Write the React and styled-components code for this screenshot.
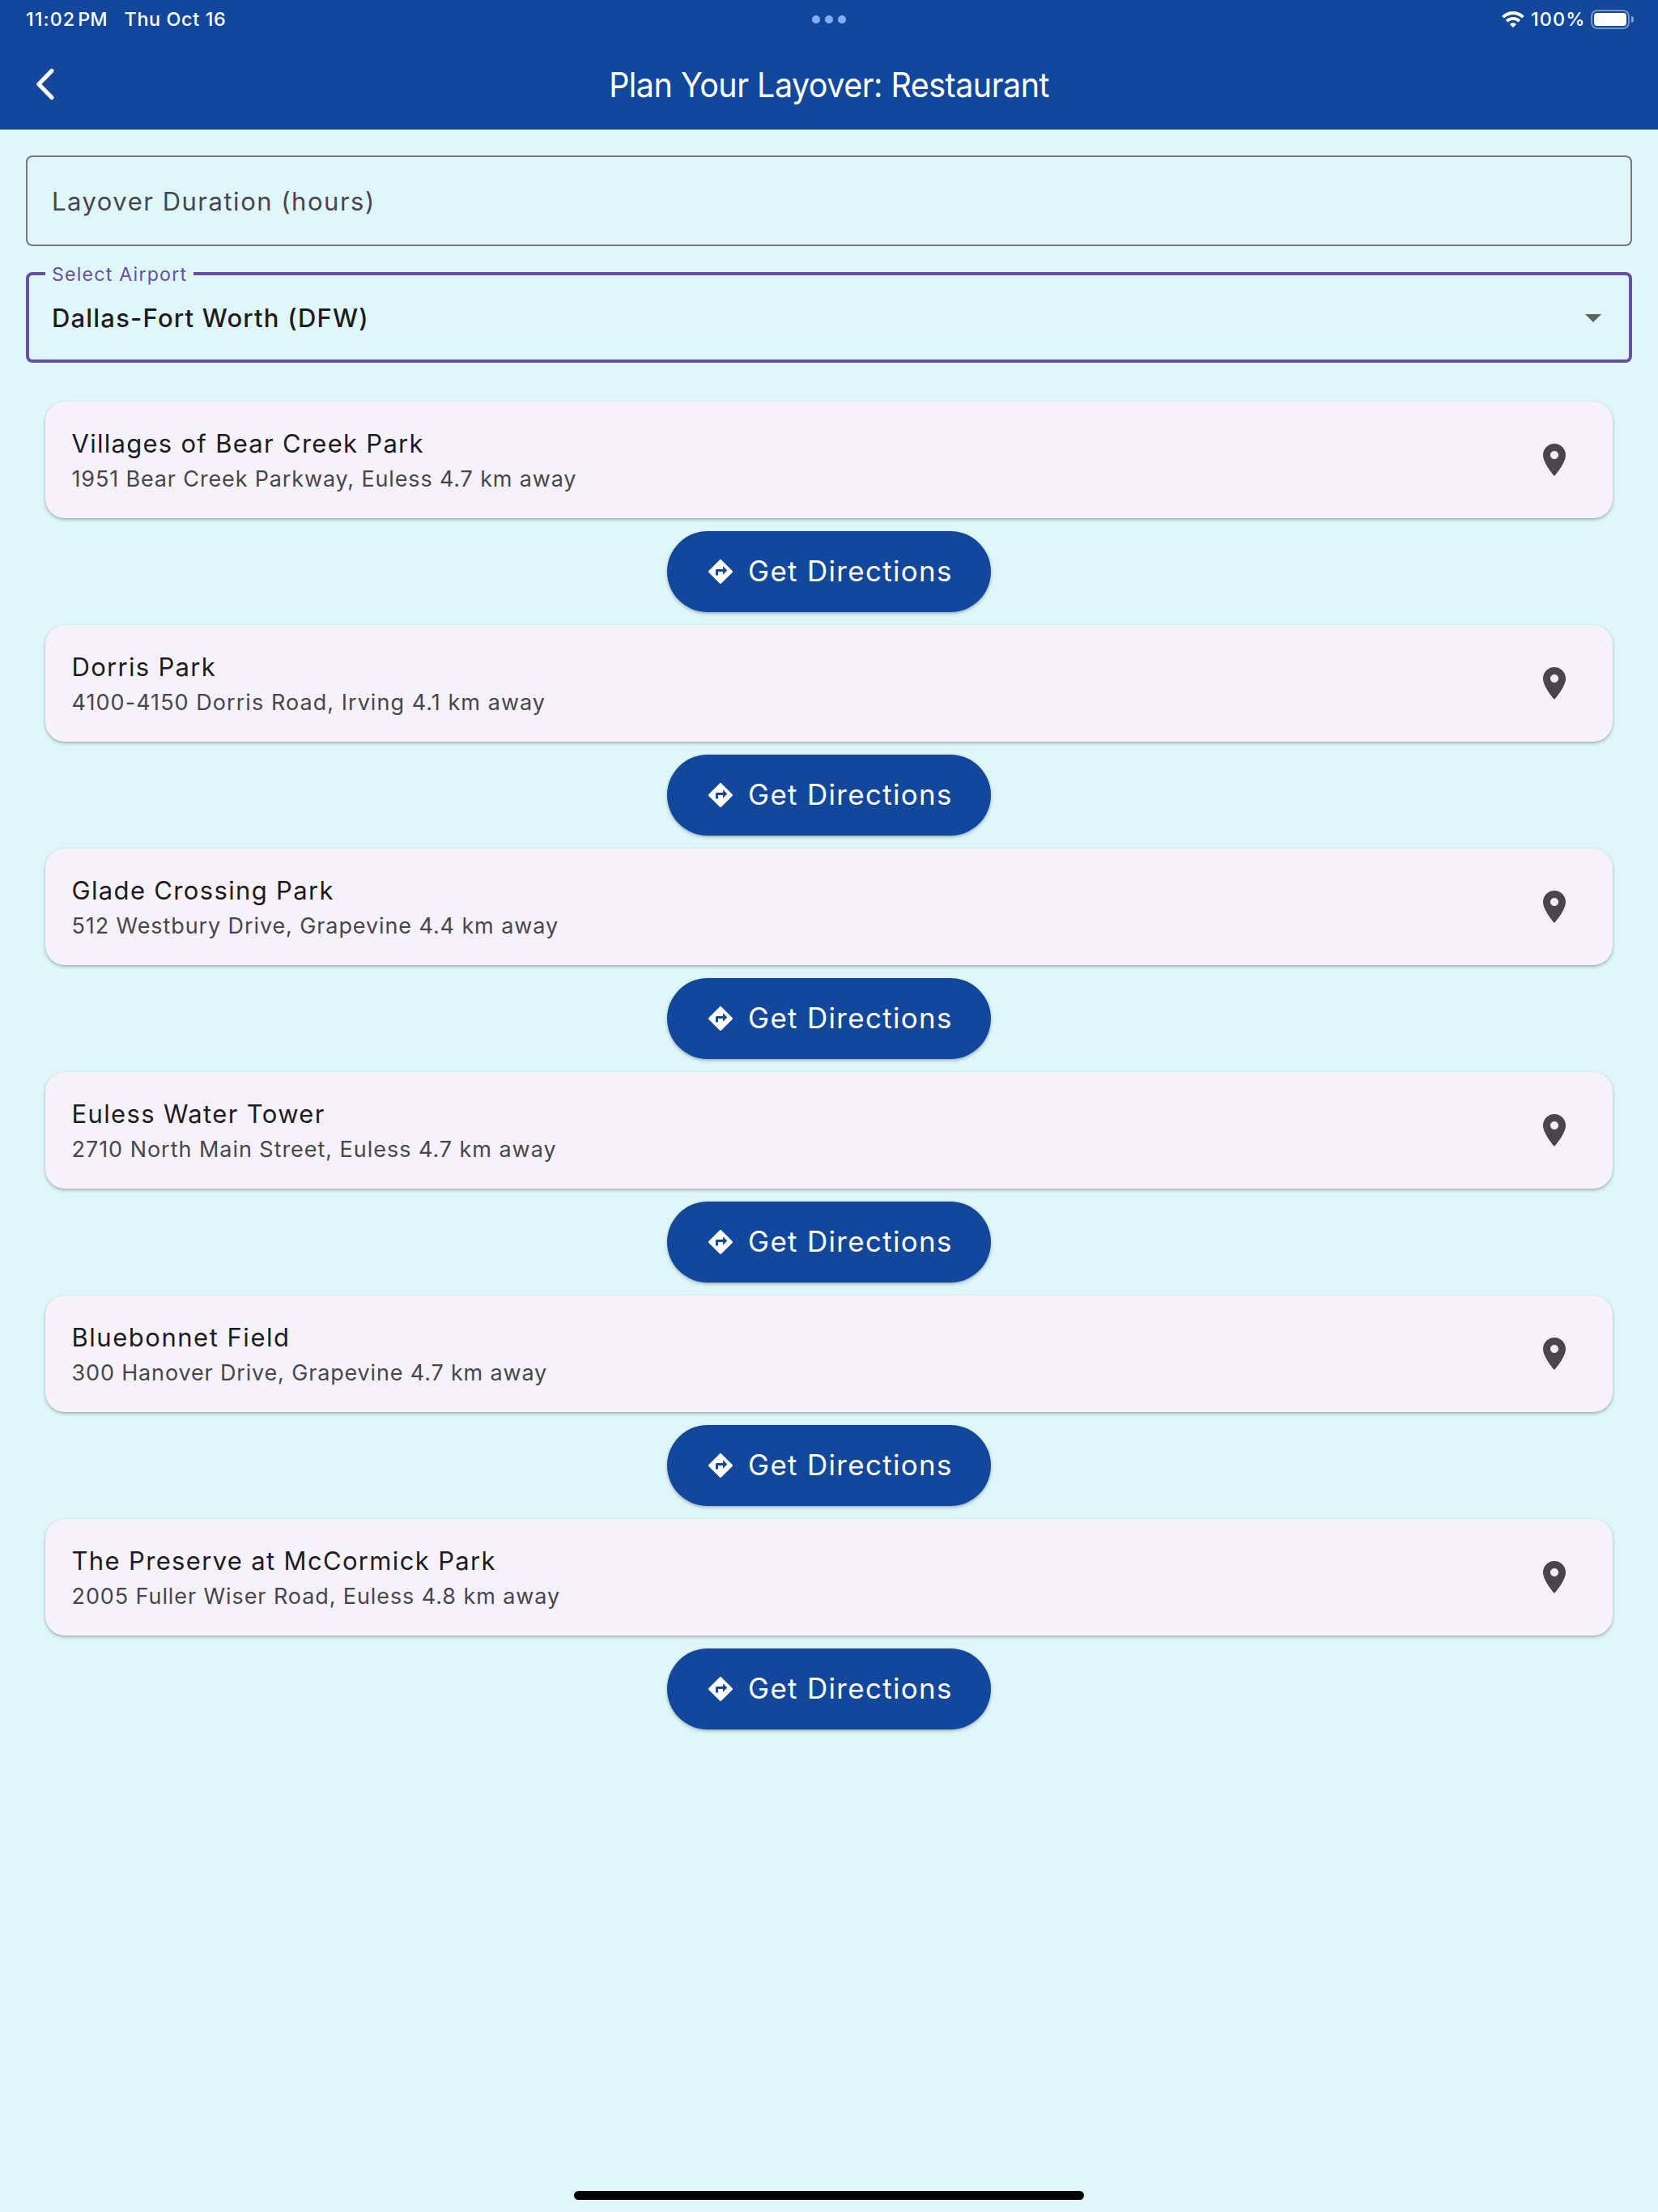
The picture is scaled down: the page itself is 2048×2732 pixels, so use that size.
import React from "react";
import styled, { createGlobalStyle } from "styled-components";

const color = {
  bar: "#13479b",
  page: "#dff7f9",
  card: "#f6f2f9",
  ink: "#1d1b20",
  muted: "#49454e",
  outline: "#7a757e",
  focus: "#6750a4",
};

const GlobalStyle = createGlobalStyle`
  * { box-sizing: border-box; }
  body {
    margin: 0;
    background: ${color.page};
    font-family: Inter, "Liberation Sans", sans-serif;
    font-weight: 370;
    -webkit-font-smoothing: antialiased;
  }
`;

const Screen = styled.div`
  width: 2048px;
  height: 2732px;
  display: flex;
  flex-direction: column;
  overflow: hidden;
  background: ${color.page};
`;

const Header = styled.header`
  height: 160px;
  flex: none;
  background: ${color.bar};
  color: #fff;
`;

const StatusBar = styled.div`
  height: 48px;
  padding: 0 30px 0 32px;
  display: grid;
  grid-template-columns: 1fr auto 1fr;
  align-items: center;
  font-size: 23.3px;
  font-weight: 480;
  line-height: 46px;
`;

const Clock = styled.div`
  display: flex;
  white-space: nowrap;
`;

const Time = styled.span`
  letter-spacing: 1.1px;
  margin-right: 3px;
`;

const Meridiem = styled.span`
  margin-right: 21px;
`;

const DateText = styled.span`
  letter-spacing: 0.66px;
`;

const Dots = styled.div`
  display: flex;
  gap: 6px;
  margin-left: -2px;
`;

const Dot = styled.i`
  width: 10px;
  height: 10px;
  border-radius: 50%;
  background: #7dafff;
`;

const Indicators = styled.div`
  display: flex;
  align-items: center;
  justify-content: flex-end;
`;

const Percent = styled.span`
  width: 73px;
  padding-left: 8px;
  letter-spacing: 1.2px;
`;

const Battery = styled.div`
  width: 48px;
  height: 24px;
  margin-left: 9px;
  padding: 2px;
  border: 2px solid rgba(255, 255, 255, 0.42);
  border-radius: 8px;
`;

const Charge = styled.div`
  height: 16px;
  border-radius: 4px;
  background: #fff;
`;

const BatteryCap = styled.div`
  width: 3px;
  height: 8px;
  margin-left: 2px;
  border-radius: 0 3px 3px 0;
  background: rgba(255, 255, 255, 0.5);
`;

const AppBar = styled.div`
  height: 112px;
  padding: 0 32px;
  display: grid;
  grid-template-columns: 48px 1fr 48px;
  align-items: center;
`;

const BackButton = styled.button`
  width: 48px;
  height: 48px;
  padding: 0;
  border: 0;
  background: none;
  color: inherit;
  display: flex;
`;

const Title = styled.h1`
  margin: 0;
  padding-top: 1px;
  text-align: center;
  font-size: 42.5px;
  font-weight: 380;
  line-height: 52px;
  letter-spacing: -0.58px;
  white-space: nowrap;
  transform: scaleX(0.93);
`;

const Content = styled.main`
  flex: 1;
  padding: 32px;
  display: flex;
  flex-direction: column;
`;

const Field = styled.div`
  position: relative;
  height: 112px;
  margin-bottom: 32px;
  padding: 0 ${(p) => (p.$focused ? 20 : 30)}px 0 ${(p) => (p.$focused ? 28 : 30)}px;
  display: flex;
  align-items: center;
  justify-content: space-between;
  border: ${(p) => (p.$focused ? `4px solid ${color.focus}` : `2px solid ${color.outline}`)};
  border-radius: 8px;
`;

const Placeholder = styled.span`
  padding-top: 2px;
  font-size: 31px;
  line-height: 48px;
  letter-spacing: 1.51px;
  color: ${color.muted};
`;

const FloatingLabel = styled.span`
  position: absolute;
  left: 20px;
  top: -17px;
  width: 183px;
  padding-left: 8px;
  background: ${color.page};
  color: ${color.focus};
  font-size: 23.2px;
  line-height: 32px;
  letter-spacing: 1.2px;
  white-space: nowrap;
`;

const FieldValue = styled.span`
  padding-top: 2px;
  font-size: 31px;
  font-weight: 480;
  line-height: 48px;
  letter-spacing: 1.19px;
  color: ${color.ink};
`;

const PlaceList = styled.ul`
  margin: 16px 24px 0;
  padding: 0;
  display: flex;
  flex-direction: column;
  gap: 16px;
  list-style: none;
`;

const Place = styled.li`
  display: flex;
  flex-direction: column;
  align-items: center;
  gap: 16px;
`;

const Card = styled.article`
  width: 100%;
  height: 144px;
  padding: 0 48px 0 32.5px;
  display: flex;
  align-items: center;
  justify-content: space-between;
  border-radius: 24px;
  background: ${color.card};
  box-shadow: 0 2px 4px rgba(0, 0, 0, 0.25), 0 1px 2px rgba(0, 0, 0, 0.08);
`;

const PlaceText = styled.div`
  display: flex;
  flex-direction: column;
  white-space: nowrap;
`;

const PlaceName = styled.span`
  font-size: 31px;
  line-height: 48px;
  letter-spacing: ${(p) => p.$tracking}px;
  color: ${color.ink};
`;

const PlaceAddress = styled.span`
  font-size: 27px;
  line-height: 40px;
  letter-spacing: ${(p) => p.$tracking}px;
  color: ${color.muted};
`;

const DirectionsButton = styled.button`
  width: 400px;
  height: 100px;
  padding: 0 0 0 48px;
  display: flex;
  align-items: center;
  gap: 16px;
  border: 0;
  border-radius: 50px;
  background: ${color.bar};
  color: #fff;
  font-family: inherit;
  font-size: 34.9px;
  font-weight: 400;
  white-space: nowrap;
  box-shadow: 0 2px 4px rgba(0, 0, 0, 0.25), 0 1px 2px rgba(0, 0, 0, 0.08);
`;

const ButtonLabel = styled.span`
  padding-bottom: 2px;
  line-height: 48px;
  letter-spacing: 1.35px;
`;

const HomeIndicator = styled.div`
  width: 630px;
  height: 11px;
  flex: none;
  margin: 0 auto 15px;
  border-radius: 6px;
  background: #000;
`;

const WifiIcon = () => (
  <svg width="28" height="20" viewBox="0 0 28 20" fill="none" stroke="#fff">
    <path d="M1.6 7.1C8.6.3 19.4.3 26.4 7.1" strokeWidth="4" />
    <path d="M6.2 12.1c4.4-4.3 11.2-4.3 15.6 0" strokeWidth="3.8" />
    <path d="M14 20l-4.1-4.1c2.3-2.2 5.9-2.2 8.2 0z" fill="#fff" stroke="none" />
  </svg>
);

const BackIcon = () => (
  <svg width="48" height="48" viewBox="0 0 48 48" fill="none">
    <path
      d="M32 7.4L15.8 24 32 40.5"
      stroke="#fff"
      strokeWidth="5.2"
      strokeLinecap="round"
      strokeLinejoin="round"
    />
  </svg>
);

const CaretIcon = () => (
  <svg width="48" height="48" viewBox="0 0 24 24" fill="#616161">
    <path d="M7 10l5 5 5-5z" />
  </svg>
);

const PinIcon = () => (
  <svg width="48" height="48" viewBox="0 0 24 24" fill={color.muted}>
    <path d="M12 2C8.13 2 5 5.13 5 9c0 5.25 7 13 7 13s7-7.75 7-13c0-3.87-3.13-7-7-7zm0 9.5c-1.38 0-2.5-1.12-2.5-2.5s1.12-2.5 2.5-2.5 2.5 1.12 2.5 2.5-1.12 2.5-2.5 2.5z" />
  </svg>
);

const DirectionsIcon = () => (
  <svg width="36" height="36" viewBox="0 0 24 24" fill="#fff">
    <path d="M21.71 11.29l-9-9c-.39-.39-1.02-.39-1.41 0l-9 9c-.39.39-.39 1.02 0 1.41l9 9c.39.39 1.02.39 1.41 0l9-9c.39-.38.39-1.01 0-1.41zM14 14.5V12h-4v3H8v-4c0-.55.45-1 1-1h5V7.5l3.5 3.5-3.5 3.5z" />
  </svg>
);

const places = [
  { name: "Villages of Bear Creek Park", nameTracking: 1.28, address: "1951 Bear Creek Parkway, Euless 4.7 km away", addressTracking: 0.85 },
  { name: "Dorris Park", nameTracking: 1.3, address: "4100-4150 Dorris Road, Irving 4.1 km away", addressTracking: 1.05 },
  { name: "Glade Crossing Park", nameTracking: 1.34, address: "512 Westbury Drive, Grapevine 4.4 km away", addressTracking: 0.9 },
  { name: "Euless Water Tower", nameTracking: 1.36, address: "2710 North Main Street, Euless 4.7 km away", addressTracking: 0.96 },
  { name: "Bluebonnet Field", nameTracking: 1.52, address: "300 Hanover Drive, Grapevine 4.7 km away", addressTracking: 0.84 },
  { name: "The Preserve at McCormick Park", nameTracking: 1.34, address: "2005 Fuller Wiser Road, Euless 4.8 km away", addressTracking: 0.91 },
];

export default function App() {
  return (
    <>
      <GlobalStyle />
      <Screen>
        <Header>
          <StatusBar>
            <Clock>
              <Time>11:02</Time>
              <Meridiem>PM</Meridiem>
              <DateText>Thu Oct 16</DateText>
            </Clock>
            <Dots>
              <Dot />
              <Dot />
              <Dot />
            </Dots>
            <Indicators>
              <WifiIcon />
              <Percent>100%</Percent>
              <Battery>
                <Charge />
              </Battery>
              <BatteryCap />
            </Indicators>
          </StatusBar>
          <AppBar>
            <BackButton aria-label="Back">
              <BackIcon />
            </BackButton>
            <Title>Plan Your Layover: Restaurant</Title>
          </AppBar>
        </Header>
        <Content>
          <Field>
            <Placeholder>Layover Duration (hours)</Placeholder>
          </Field>
          <Field $focused>
            <FloatingLabel>Select Airport</FloatingLabel>
            <FieldValue>Dallas-Fort Worth (DFW)</FieldValue>
            <CaretIcon />
          </Field>
          <PlaceList>
            {places.map((place) => (
              <Place key={place.name}>
                <Card>
                  <PlaceText>
                    <PlaceName $tracking={place.nameTracking}>{place.name}</PlaceName>
                    <PlaceAddress $tracking={place.addressTracking}>{place.address}</PlaceAddress>
                  </PlaceText>
                  <PinIcon />
                </Card>
                <DirectionsButton>
                  <DirectionsIcon />
                  <ButtonLabel>Get Directions</ButtonLabel>
                </DirectionsButton>
              </Place>
            ))}
          </PlaceList>
        </Content>
        <HomeIndicator />
      </Screen>
    </>
  );
}
